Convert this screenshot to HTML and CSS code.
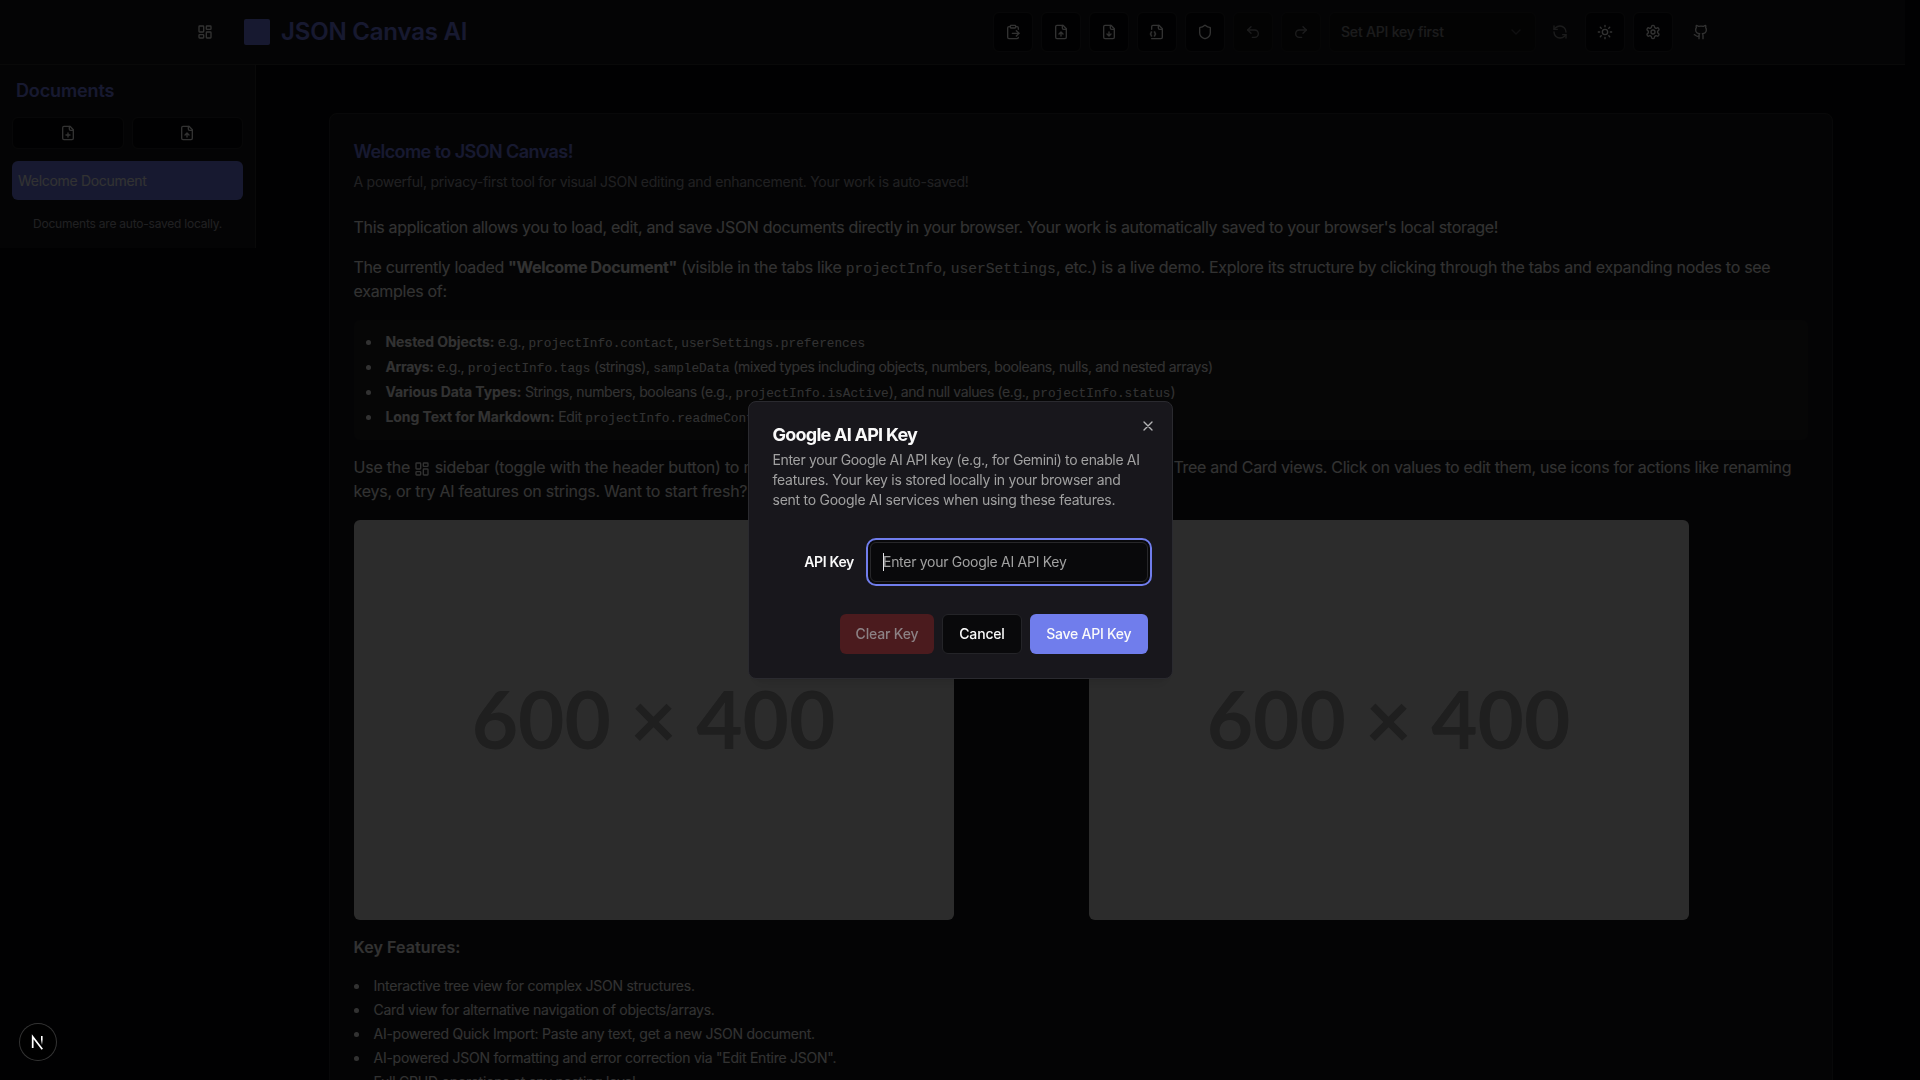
FILE: index.html
```html
<!DOCTYPE html>
<html lang="en">
<head>
<meta charset="utf-8">
<title>JSON Canvas AI</title>
<link rel="stylesheet" href="styles.css">
</head>
<body>
<svg class="defs" aria-hidden="true">
  <symbol id="dashboard" viewBox="0 0 24 24"><rect width="7" height="9" x="3" y="3" rx="1"/><rect width="7" height="5" x="14" y="3" rx="1"/><rect width="7" height="9" x="14" y="12" rx="1"/><rect width="7" height="5" x="3" y="16" rx="1"/></symbol>
  <symbol id="paste" viewBox="0 0 24 24"><path d="M15 2H9a1 1 0 0 0-1 1v2c0 .6.4 1 1 1h6c.6 0 1-.4 1-1V3c0-.6-.4-1-1-1Z"/><path d="M8 4H6a2 2 0 0 0-2 2v14a2 2 0 0 0 2 2h12a2 2 0 0 0 2-2M16 4h2a2 2 0 0 1 2 2v2M11 14h10"/><path d="m17 10 4 4-4 4"/></symbol>
  <symbol id="file-up" viewBox="0 0 24 24"><path d="M15 2H6a2 2 0 0 0-2 2v16a2 2 0 0 0 2 2h12a2 2 0 0 0 2-2V7Z"/><path d="M14 2v4a2 2 0 0 0 2 2h4M12 12v6M15 15l-3-3-3 3"/></symbol>
  <symbol id="file-down" viewBox="0 0 24 24"><path d="M15 2H6a2 2 0 0 0-2 2v16a2 2 0 0 0 2 2h12a2 2 0 0 0 2-2V7Z"/><path d="M14 2v4a2 2 0 0 0 2 2h4M12 18v-6M9 15l3 3 3-3"/></symbol>
  <symbol id="file-plus" viewBox="0 0 24 24"><path d="M15 2H6a2 2 0 0 0-2 2v16a2 2 0 0 0 2 2h12a2 2 0 0 0 2-2V7Z"/><path d="M14 2v4a2 2 0 0 0 2 2h4M9 15h6M12 18v-6"/></symbol>
  <symbol id="file-json" viewBox="0 0 24 24"><path d="M4 22h14a2 2 0 0 0 2-2V7l-5-5H6a2 2 0 0 0-2 2v4"/><path d="M14 2v4a2 2 0 0 0 2 2h4"/><path d="M4 12a1 1 0 0 0-1 1v1a1 1 0 0 1-1 1 1 1 0 0 1 1 1v1a1 1 0 0 0 1 1"/><path d="M8 18a1 1 0 0 0 1-1v-1a1 1 0 0 1 1-1 1 1 0 0 1-1-1v-1a1 1 0 0 0-1-1"/></symbol>
  <symbol id="shield" viewBox="0 0 24 24"><path d="M20 13c0 5-3.500 7.500-7.660 8.950a1 1 0 0 1-.67-.01C7.500 20.500 4 18 4 13V6a1 1 0 0 1 1-1c2 0 4.500-1.200 6.240-2.720a1.170 1.170 0 0 1 1.520 0C14.510 3.810 17 5 19 5a1 1 0 0 1 1 1z"/></symbol>
  <symbol id="undo" viewBox="0 0 24 24"><path d="M9 14 4 9l5-5"/><path d="M4 9h10.500a5.500 5.500 0 0 1 0 11H11"/></symbol>
  <symbol id="redo" viewBox="0 0 24 24"><path d="m15 14 5-5-5-5"/><path d="M20 9H9.500a5.500 5.500 0 0 0 0 11H13"/></symbol>
  <symbol id="chevron" viewBox="0 0 24 24"><path d="m6 9 6 6 6-6"/></symbol>
  <symbol id="refresh" viewBox="0 0 24 24"><path d="M21 12a9 9 0 0 0-9-9 9.750 9.750 0 0 0-6.740 2.740L3 8"/><path d="M3 3v5h5M3 12a9 9 0 0 0 9 9 9.750 9.750 0 0 0 6.740-2.740L21 16"/><path d="M16 16h5v5"/></symbol>
  <symbol id="sun" viewBox="0 0 24 24"><circle cx="12" cy="12" r="4"/><path d="M12 2v2M12 20v2M4.930 4.930l1.410 1.410M17.660 17.660l1.410 1.410M2 12h2M20 12h2M6.340 17.660l-1.410 1.410M19.070 4.930l-1.410 1.410"/></symbol>
  <symbol id="settings" viewBox="0 0 24 24"><path d="M12.220 2h-.44a2 2 0 0 0-2 2v.18a2 2 0 0 1-1 1.730l-.43.25a2 2 0 0 1-2 0l-.15-.08a2 2 0 0 0-2.730.73l-.22.38a2 2 0 0 0 .73 2.730l.15.1a2 2 0 0 1 1 1.720v.51a2 2 0 0 1-1 1.740l-.15.09a2 2 0 0 0-.73 2.730l.22.38a2 2 0 0 0 2.730.73l.15-.08a2 2 0 0 1 2 0l.43.25a2 2 0 0 1 1 1.730V20a2 2 0 0 0 2 2h.44a2 2 0 0 0 2-2v-.18a2 2 0 0 1 1-1.730l.43-.25a2 2 0 0 1 2 0l.15.08a2 2 0 0 0 2.730-.73l.22-.39a2 2 0 0 0-.73-2.730l-.15-.08a2 2 0 0 1-1-1.740v-.5a2 2 0 0 1 1-1.740l.15-.09a2 2 0 0 0 .73-2.730l-.22-.38a2 2 0 0 0-2.730-.73l-.15.08a2 2 0 0 1-2 0l-.43-.25a2 2 0 0 1-1-1.730V4a2 2 0 0 0-2-2z"/><circle cx="12" cy="12" r="3"/></symbol>
  <symbol id="github" viewBox="0 0 24 24"><path d="M15 22v-4a4.800 4.800 0 0 0-1-3.500c3 0 6-2 6-5.500.08-1.250-.27-2.480-1-3.500.28-1.150.28-2.350 0-3.500 0 0-1 0-3 1.500-2.640-.5-5.360-.5-8 0C6 2 5 2 5 2c-.3 1.150-.3 2.350 0 3.500A5.403 5.403 0 0 0 4 9c0 3.500 3 5.500 6 5.500-.39.49-.68 1.050-.85 1.650-.17.6-.22 1.230-.15 1.850v4"/><path d="M9 18c-4.510 2-5-2-7-2"/></symbol>
  <symbol id="close" viewBox="0 0 24 24"><path d="M18 6 6 18M6 6l12 12"/></symbol>
</svg>

<div class="page">
  <header class="header">
    <div class="brand">
      <button class="ghost"><svg class="icon"><use href="#dashboard"/></svg></button>
      <span class="logo"></span>
      <h1 class="title">JSON Canvas AI</h1>
    </div>
    <div class="toolbar">
      <button class="tool"><svg class="icon"><use href="#paste"/></svg></button>
      <button class="tool"><svg class="icon"><use href="#file-up"/></svg></button>
      <button class="tool"><svg class="icon"><use href="#file-down"/></svg></button>
      <button class="tool"><svg class="icon"><use href="#file-json"/></svg></button>
      <button class="tool"><svg class="icon"><use href="#shield"/></svg></button>
      <button class="tool off"><svg class="icon"><use href="#undo"/></svg></button>
      <button class="tool off"><svg class="icon"><use href="#redo"/></svg></button>
      <div class="model">
        <div class="select off"><span>Set API key first</span><svg class="icon faint"><use href="#chevron"/></svg></div>
        <button class="ghost refresh off"><svg class="icon"><use href="#refresh"/></svg></button>
      </div>
      <button class="tool"><svg class="icon"><use href="#sun"/></svg></button>
      <button class="tool"><svg class="icon"><use href="#settings"/></svg></button>
      <button class="ghost"><svg class="icon"><use href="#github"/></svg></button>
    </div>
  </header>

  <div class="body">
    <aside class="sidebar">
      <h2 class="side-title">Documents</h2>
      <div class="side-actions">
        <button class="tool wide"><svg class="icon"><use href="#file-plus"/></svg></button>
        <button class="tool wide"><svg class="icon"><use href="#file-up"/></svg></button>
      </div>
      <div class="doc">Welcome Document</div>
      <p class="side-note">Documents are auto-saved locally.</p>
    </aside>

    <main class="main">
      <section class="card">
        <h3 class="card-title">Welcome to JSON Canvas!</h3>
        <p class="card-sub">A powerful, privacy-first tool for visual JSON editing and enhancement. Your work is auto-saved!</p>
        <p class="para lead">This application allows you to load, edit, and save JSON documents directly in your browser. Your work is automatically saved to your browser's local storage!</p>
        <p class="para demo"><span class="tight">The currently loaded <b>"Welcome Document"</b></span> (visible in the tabs like <code>projectInfo</code>, <code>userSettings</code>, etc.) is a live demo. Explore its structure by clicking through the tabs and expanding nodes to see<br>examples of:</p>
        <ul class="examples">
          <li><b>Nested Objects:</b> e.g., <code>projectInfo.contact</code>, <code>userSettings.preferences</code></li>
          <li><b class="narrow">Arrays:</b> e.g., <code>projectInfo.tags</code> (strings), <code>sampleData</code> (mixed types including objects, numbers, booleans, nulls, and nested arrays)</li>
          <li><b>Various Data Types:</b> Strings, numbers, booleans (e.g., <code>projectInfo.isActive</code>), and null values (e.g., <code>projectInfo.status</code>)</li>
          <li><b>Long Text for Markdown:</b> Edit <code>projectInfo.readmeContent</code></li>
        </ul>
        <div class="para usage">
          <div class="usage-row"><span class="usage-start">Use the <svg class="icon inline"><use href="#dashboard"/></svg> sidebar (toggle with the header button) to manage documents.</span><span class="usage-end">Tree and Card views. Click on values to edit them, use icons for actions like renaming</span></div>
          <div class="usage-next">keys, or try AI features on strings. Want to start fresh?</div>
        </div>
        <div class="images">
          <div class="placeholder">600 × 400</div>
          <div class="placeholder">600 × 400</div>
        </div>
        <h4 class="features-title">Key Features:</h4>
        <ul class="features">
          <li>Interactive tree view for complex JSON structures.</li>
          <li>Card view for alternative navigation of objects/arrays.</li>
          <li>AI-powered Quick Import: Paste any text, get a new JSON document.</li>
          <li>AI-powered JSON formatting and error correction via "Edit Entire JSON".</li>
          <li>Full CRUD operations at any nesting level.</li>
        </ul>
      </section>
    </main>
  </div>
</div>

<div class="overlay">
  <div class="dialog" role="dialog">
    <svg class="icon close"><use href="#close"/></svg>
    <h2 class="dialog-title">Google AI API Key</h2>
    <p class="dialog-text">Enter your Google AI API key (e.g., for Gemini) to enable AI<br>features. Your key is stored locally in your browser and<br>sent to Google AI services when using these features.</p>
    <div class="field">
      <span class="label">API Key</span>
      <div class="input"><span class="caret"></span>Enter your Google AI API Key</div>
    </div>
    <div class="actions">
      <button class="btn danger">Clear Key</button>
      <button class="btn cancel">Cancel</button>
      <button class="btn primary">Save API Key</button>
    </div>
  </div>
</div>

<div class="dev-badge">
  <svg width="16" height="16" viewBox="0 0 16 16">
    <defs><linearGradient id="fade" x1="0" y1="0" x2="0" y2="1"><stop offset=".4" stop-color="#fff"/><stop offset="1" stop-color="#fff" stop-opacity="0"/></linearGradient></defs>
    <path d="M2.700 14V2.700L12.300 15.200" fill="none" stroke="#fff" stroke-width="1.700"/>
    <rect x="11" y="2" width="1.600" height="9" fill="url(#fade)"/>
  </svg>
</div>
</body>
</html>
```
FILE: styles.css
```css
* { box-sizing: border-box; margin: 0; padding: 0; }

body {
  height: 1080px;
  overflow: hidden;
  background: #09090b;
  color: #fafafa;
  font: 400 16px/24px Inter, "Liberation Sans", sans-serif;
  letter-spacing: -0.0193em;
}

button { font: inherit; letter-spacing: inherit; color: inherit; border: 0; background: none; }
ul { list-style: none; }
li::before { content: ""; display: inline-block; width: 5px; height: 5px; margin: 0 15px 0 -20px; border-radius: 50%; background: currentColor; vertical-align: 2.5px; }
code { font-family: "Liberation Mono", monospace; font-size: 0.9135em; line-height: 1; letter-spacing: 0; }

.defs { position: absolute; width: 0; height: 0; }
.icon { width: 16px; height: 16px; flex: none; fill: none; stroke: currentColor; stroke-width: 2; stroke-linecap: round; stroke-linejoin: round; }

.page { height: 1080px; overflow: hidden; padding-right: 15px; }

/* Header */
.header { display: flex; justify-content: space-between; height: 65px; padding: 12px 184px 12px 185px; background: #18181b; border-bottom: 1px solid #2d2d30; }
.brand { display: flex; align-items: center; height: 40px; }
.logo { width: 26px; height: 26px; margin: 0 11px 0 19px; background: #737fee; border-radius: 2px; }
.title { font-size: 24px; font-weight: 600; line-height: 32px; letter-spacing: -0.008em; color: #737fee; }
.toolbar { display: flex; gap: 8px; }
.tool, .ghost { display: flex; align-items: center; justify-content: center; width: 40px; height: 40px; }
.tool { background: #09090b; border: 1px solid #27272a; border-radius: 6px; }
.model { display: flex; gap: 7px; }
.select { display: flex; align-items: center; justify-content: space-between; width: 207px; height: 40px; padding: 0 11px; background: #09090b; border: 1px solid #27272a; border-radius: 6px; font-size: 14px; font-weight: 500; letter-spacing: -0.014em; }
.refresh { width: 34px; }
.off { opacity: 0.5; }
.faint { opacity: 0.5; }

/* Sidebar */
.body { display: flex; align-items: flex-start; }
.sidebar { width: 256px; height: 183px; padding: 12px; background: #18181b; border-right: 1px solid #2d2d30; }
.side-title { padding-left: 4px; font-size: 18px; line-height: 28px; font-weight: 600; letter-spacing: -0.007em; color: #737fee; }
.side-actions { display: flex; gap: 8px; margin: 12px 0; }
.wide { flex: 1; height: 32px; }
.doc { height: 39px; padding-left: 6px; border-radius: 6px; background: #737fee; font-size: 14px; line-height: 39px; }
.side-note { margin-top: 16px; font-size: 12px; line-height: 16px; letter-spacing: -0.0185em; text-align: center; color: #a1a1aa; }

/* Welcome card */
.main { flex: 1; padding-top: 48px; }
.card { width: 1504px; height: 1300px; margin: 0 auto; padding: 24px; background: #18181b; border: 1px solid #2b2b2e; border-radius: 8px; }
.card-title { font-size: 18px; line-height: 28px; font-weight: 600; letter-spacing: -0.031em; color: #737fee; }
.card-sub { margin-top: 6px; font-size: 14px; line-height: 20px; letter-spacing: -0.0185em; color: #a1a1aa; }
.para { margin-top: 16px; white-space: nowrap; }
.lead { margin-top: 23px; }
.demo { letter-spacing: -0.018em; }
.tight { letter-spacing: -0.0215em; }
.examples { height: 120px; margin-top: 17px; padding: 9px 0 0 32px; background: #1e1e21; border-radius: 6px; font-size: 14px; line-height: 25px; letter-spacing: -0.0265em; white-space: nowrap; }
.examples b { letter-spacing: -0.005em; }
.examples .narrow { letter-spacing: -0.025em; }
.usage { margin-top: 15px; }
.usage-row { display: flex; }
.usage-start { width: 820px; letter-spacing: -0.0145em; }
.usage-end { letter-spacing: -0.0195em; }
.usage-next { letter-spacing: -0.0155em; }
.inline { vertical-align: -4px; }
.images { display: grid; grid-template-columns: 1fr 1fr; gap: 16px; margin-top: 17px; }
.placeholder { display: flex; align-items: center; justify-content: center; width: 600px; height: 400px; padding-bottom: 5px; border-radius: 6px; background: #ddd; color: #999; font: 700 80px/1 Lato, sans-serif; letter-spacing: 0; }
.features-title { margin-top: 15px; font-size: 16px; line-height: 24px; font-weight: 600; letter-spacing: 0.006em; }
.features { margin-top: 15px; padding-left: 20px; font-size: 14px; line-height: 24px; letter-spacing: -0.0175em; }

/* Dialog */
.overlay { position: fixed; inset: 0; display: flex; align-items: center; justify-content: center; background: rgba(0, 0, 0, 0.8); }
.dialog { position: relative; width: 425px; height: 278px; padding: 24px; background: #18171c; border: 1px solid #2a2a2f; border-radius: 8px; box-shadow: 0 10px 15px -3px rgba(0, 0, 0, 0.1), 0 4px 6px -4px rgba(0, 0, 0, 0.1); }
.close { position: absolute; top: 16px; right: 16px; color: #b4b4b6; }
.dialog-title { font-size: 18px; line-height: 18px; font-weight: 700; letter-spacing: -0.042em; }
.dialog-text { margin-top: 6px; font-size: 14px; line-height: 20px; letter-spacing: -0.0185em; color: #a1a1a1; white-space: nowrap; }
.dialog-text::first-line { letter-spacing: -0.0245em; }
.field { display: flex; align-items: center; justify-content: flex-end; gap: 16px; margin-top: 32px; }
.label { font-size: 14px; font-weight: 600; letter-spacing: -0.025em; }
.input { position: relative; width: 277.5px; height: 40px; padding-left: 12px; background: #09090b; border: 1px solid #27272a; border-radius: 6px; outline: 2px solid #707dec; outline-offset: 2px; box-shadow: 0 0 0 2px #09090b; font-size: 14px; line-height: 38px; color: #a1a1a1; letter-spacing: -0.0205em; }
.caret { position: absolute; left: 12px; top: 10px; width: 1px; height: 18px; background: #e4e4e7; }
.actions { display: flex; justify-content: flex-end; gap: 8px; margin-top: 32px; }
.btn { height: 40px; border-radius: 6px; font-size: 14px; font-weight: 500; letter-spacing: -0.012em; }
.danger { width: 94px; background: #4b1b1e; color: #8c8184; }
.cancel { width: 80px; background: #09090b; border: 1px solid #242428; }
.primary { width: 117.5px; background: #707dec; letter-spacing: -0.018em; }

.dev-badge { position: fixed; left: 20px; bottom: 20px; display: flex; align-items: center; justify-content: center; width: 36px; height: 36px; border-radius: 50%; background: #000; box-shadow: 0 0 0 1px #333; }
```
